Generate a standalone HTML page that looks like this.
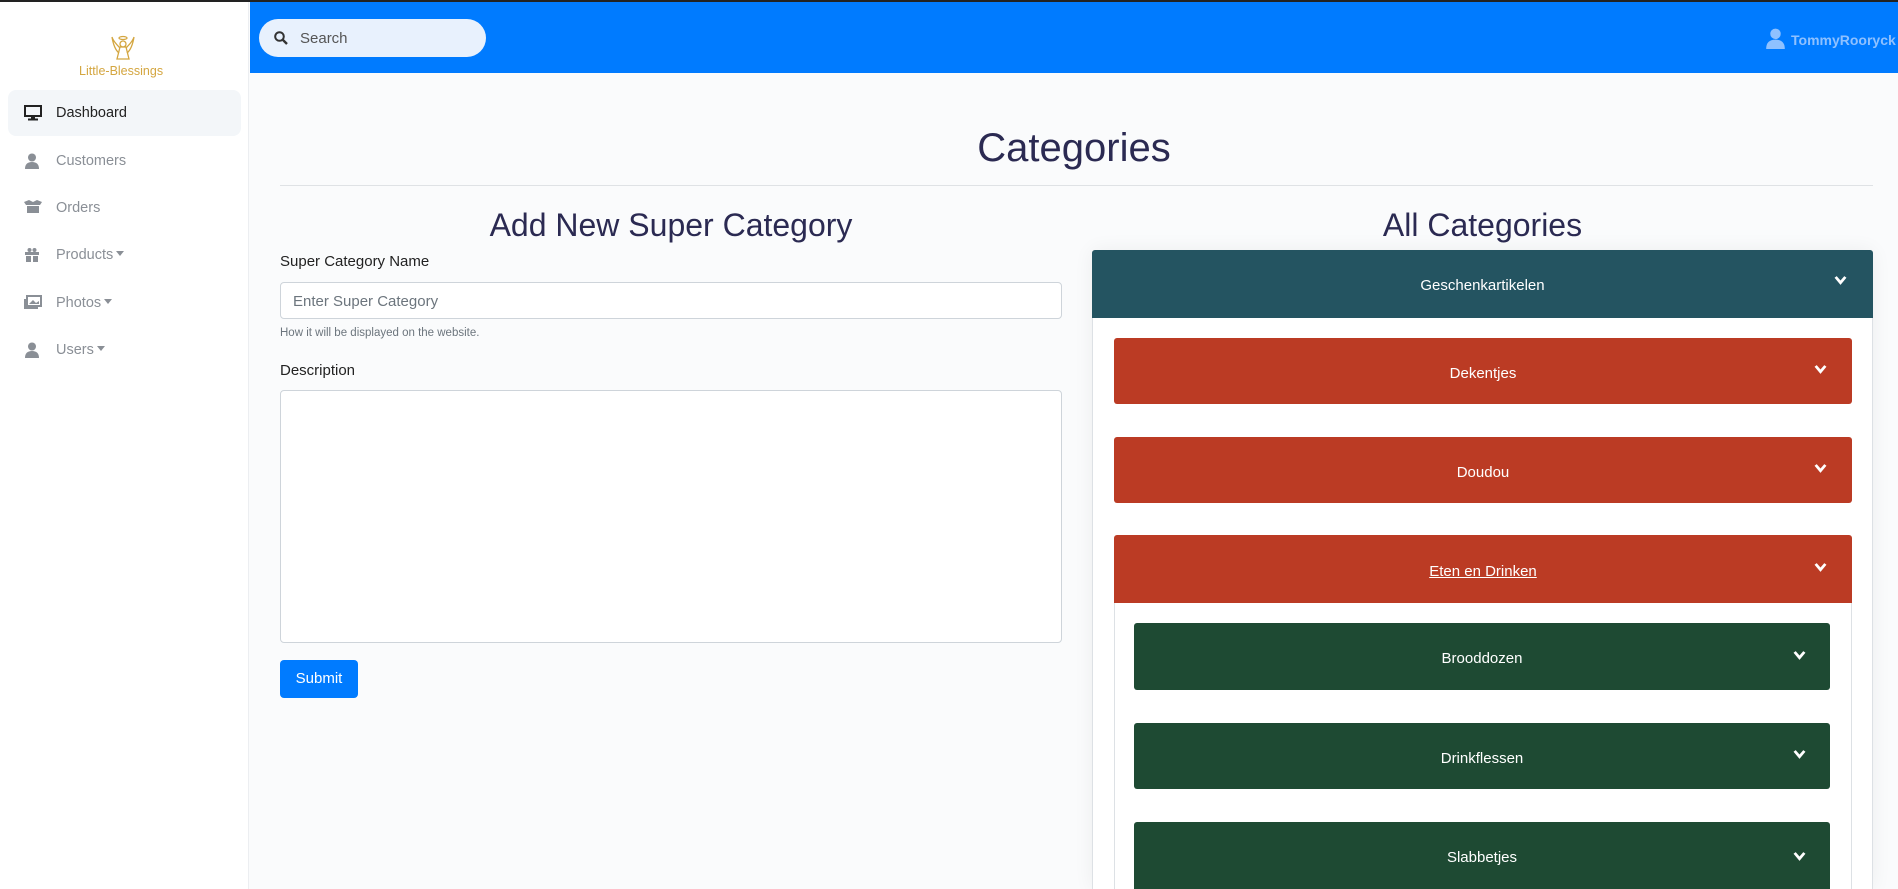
<!DOCTYPE html>
<html style="width:1898px;height:889px;overflow:hidden"><head><meta charset="utf-8"><style>
*{box-sizing:border-box;margin:0;padding:0}
body{width:1898px;height:889px;overflow:hidden;background:#fafbfc;font-family:"Liberation Sans",sans-serif;position:relative}
.abs{position:absolute}
.topline{left:0;top:0;width:1898px;height:2px;background:#222}
.side{left:0;top:2px;width:249px;height:887px;background:#fff;border-right:1px solid #eceef1}
.nav{position:absolute;left:8px;width:233px;height:46px;border-radius:8px;font-size:14.5px;color:#8a8f96}
.nav svg{position:absolute;left:16px;top:15px}
.nav span{position:absolute;left:48px;top:15px}
.nav.act{background:#f3f6f9;color:#222}
.caret{display:inline-block;border-left:4px solid transparent;border-right:4px solid transparent;border-top:5px solid #8a8f96;margin-left:3px;vertical-align:3px}
.top{left:250px;top:2px;width:1648px;height:71px;background:#007bff}
.search{left:259px;top:19px;width:227px;height:38px;border-radius:19px;background:#e8f1fd;color:#555;font-size:15px}
h1,h2{position:absolute;color:#2b2a52;font-weight:normal;text-align:center}
.lbl{position:absolute;left:280px;font-size:15px;color:#222}
.bar{position:absolute;color:#fff;font-size:15px;text-align:center}
.chev{position:absolute;top:50%;margin-top:-7px}
</style></head><body>
<div class="abs topline"></div>
<div class="abs side">
  <svg class="abs" style="left:111px;top:33px" width="24" height="28" viewBox="0 0 24 28"><g fill="none" stroke="#d4a640" stroke-width="1.3"><ellipse cx="12" cy="3" rx="4" ry="1.5"/><circle cx="12" cy="9" r="3"/><path d="M9 12 L6 24 H18 L15 12Z"/><path d="M9 13 Q2 6 1 2 Q3 14 8 18 M15 13 Q22 6 23 2 Q21 14 16 18"/></g></svg>
  <div class="abs" style="left:79px;top:62px;font-size:12.5px;color:#d4a640">Little-Blessings</div>
  <div class="nav act" style="top:88px"><svg width="18" height="16" viewBox="0 0 18 16"><rect x="1" y="1" width="16" height="10" fill="none" stroke="#222" stroke-width="2"/><rect x="7" y="11" width="4" height="3" fill="#222"/><rect x="4" y="13.5" width="10" height="2" fill="#222"/></svg><span>Dashboard</span></div>
  <div class="nav" style="top:136px"><svg width="16" height="16" viewBox="0 0 16 16" fill="#8a8f96"><circle cx="8" cy="4.5" r="4"/><path d="M1 16 Q1 9 8 9 Q15 9 15 16Z"/></svg><span>Customers</span></div>
  <div class="nav" style="top:183px"><svg width="18" height="14" viewBox="0 0 18 14" fill="#8a8f96"><path d="M0 2 L5 0 L9 2 L13 0 L18 2 L16 5 L2 5Z M3 6 H15 V13 H3Z"/></svg><span>Orders</span></div>
  <div class="nav" style="top:230px"><svg width="16" height="16" viewBox="0 0 16 16" fill="#8a8f96"><path d="M1 5 H15 V8 H1Z M2 9 H7 V15 H2Z M9 9 H14 V15 H9Z"/><circle cx="5.5" cy="3" r="2"/><circle cx="10.5" cy="3" r="2"/></svg><span>Products<i class="caret"></i></span></div>
  <div class="nav" style="top:278px"><svg width="18" height="14" viewBox="0 0 18 14"><rect x="3" y="1" width="14" height="10" fill="none" stroke="#8a8f96" stroke-width="2"/><path d="M1 4 V13 H14" fill="none" stroke="#8a8f96" stroke-width="2"/><path d="M5 9 L9 5 L12 8 L15 6 V9Z" fill="#8a8f96"/></svg><span>Photos<i class="caret"></i></span></div>
  <div class="nav" style="top:325px"><svg width="16" height="16" viewBox="0 0 16 16" fill="#8a8f96"><circle cx="8" cy="4.5" r="4"/><path d="M1 16 Q1 9 8 9 Q15 9 15 16Z"/></svg><span>Users<i class="caret"></i></span></div>
</div>
<div class="abs top"></div>
<div class="abs search"><svg class="abs" style="left:15px;top:12px" width="14" height="14" viewBox="0 0 14 14"><circle cx="5.5" cy="5.5" r="4.3" fill="none" stroke="#333" stroke-width="2"/><path d="M8.5 8.5 L13 13" stroke="#333" stroke-width="2.4"/></svg><span class="abs" style="left:41px;top:11px">Search</span></div>
<svg class="abs" style="left:1766px;top:28px" width="19" height="21" viewBox="0 0 16 18" fill="#8fc1ff"><circle cx="8" cy="5" r="4.5"/><path d="M0 18 Q0 10 8 10 Q16 10 16 18Z"/></svg>
<div class="abs" style="left:1791px;top:32px;font-size:14px;font-weight:bold;color:#8fc1ff">TommyRooryck</div>

<h1 style="left:250px;width:1648px;top:126px;font-size:40px">Categories</h1>
<div class="abs" style="left:280px;top:185px;width:1593px;height:1px;background:#dfe2e5"></div>
<h2 style="left:280px;width:782px;top:207px;font-size:32px">Add New Super Category</h2>
<h2 style="left:1092px;width:781px;top:207px;font-size:32px">All Categories</h2>
<div class="lbl" style="top:253px">Super Category Name</div>
<div class="abs" style="left:280px;top:282px;width:782px;height:37px;border:1px solid #ced4da;border-radius:4px;background:#fff;font-size:15px;color:#6c757d;padding:10px 12px">Enter Super Category</div>
<div class="abs" style="left:280px;top:327px;font-size:11.5px;color:#6c757d">How it will be displayed on the website.</div>
<div class="lbl" style="top:362px">Description</div>
<div class="abs" style="left:280px;top:390px;width:782px;height:253px;border:1px solid #ced4da;border-radius:4px;background:#fff"></div>
<div class="abs" style="left:280px;top:660px;width:78px;height:38px;border-radius:4px;background:#007bff;color:#fff;font-size:15px;text-align:center;line-height:38px">Submit</div>

<div class="abs" style="left:1092px;top:250px;width:781px;height:639px;background:#fff;border:1px solid #dde1e5;border-bottom:none;border-radius:3px 3px 0 0;box-shadow:0 0 20px rgba(0,0,0,0.06)"></div>
<svg width="0" height="0" style="position:absolute"><defs><symbol id="c" viewBox="0 0 12 10"><path d="M0.5 2.5 L6 9 L11.5 2.5 L9.5 1 L6 5 L2.5 1Z" fill="#fff"/></symbol></defs></svg>
<div class="bar" style="left:1092px;top:250px;width:781px;height:68px;background:#245461;border-radius:3px 3px 0 0;line-height:72px">Geschenkartikelen<svg class="chev" style="left:742px;margin-top:-9px" width="13" height="11"><use href="#c"/></svg></div>
<div class="bar" style="left:1114px;top:338px;width:738px;height:66px;background:#bb3b24;border-radius:3px;line-height:72px">Dekentjes<svg class="chev" style="left:700px" width="13" height="11"><use href="#c"/></svg></div>
<div class="bar" style="left:1114px;top:437px;width:738px;height:66px;background:#bb3b24;border-radius:3px;line-height:72px">Doudou<svg class="chev" style="left:700px" width="13" height="11"><use href="#c"/></svg></div>
<div class="bar" style="left:1114px;top:535px;width:738px;height:68px;background:#bb3b24;border-radius:3px 3px 0 0;line-height:74px"><u>Eten en Drinken</u><svg class="chev" style="left:700px" width="13" height="11"><use href="#c"/></svg></div>
<div class="abs" style="left:1114px;top:603px;width:738px;height:286px;background:#fff;border:1px solid #dde1e5;border-top:none;border-bottom:none"></div>
<div class="bar" style="left:1134px;top:623px;width:696px;height:67px;background:#1e4a33;border-radius:3px;line-height:72px">Brooddozen<svg class="chev" style="left:659px" width="13" height="11"><use href="#c"/></svg></div>
<div class="bar" style="left:1134px;top:723px;width:696px;height:66px;background:#1e4a33;border-radius:3px;line-height:72px">Drinkflessen<svg class="chev" style="left:659px" width="13" height="11"><use href="#c"/></svg></div>
<div class="bar" style="left:1134px;top:822px;width:696px;height:67px;background:#1e4a33;border-radius:3px 3px 0 0;line-height:72px">Slabbetjes<svg class="chev" style="left:659px;top:29px;margin:0" width="13" height="11"><use href="#c"/></svg></div>
</body></html>
